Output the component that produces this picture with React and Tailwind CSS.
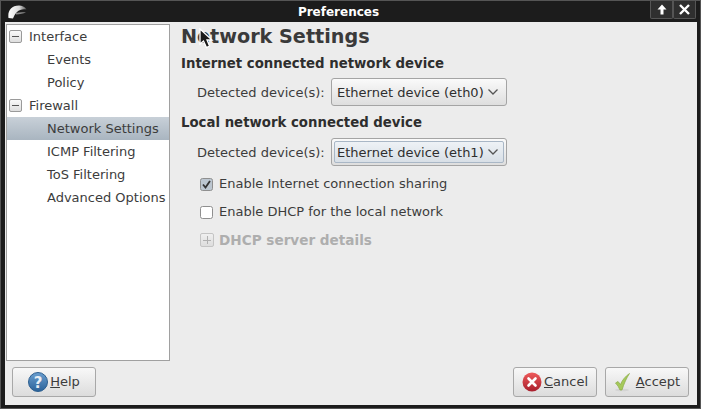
import React from "react";

const font = { fontFamily: '"DejaVu Sans", sans-serif' };

function Logo() {
  return (
    <svg width="20" height="14" viewBox="0 0 20 14" className="ml-[7px]">
      <defs>
        <linearGradient id="lg" x1="0" y1="0" x2="1" y2="0">
          <stop offset="0" stopColor="#ffffff" />
          <stop offset="0.6" stopColor="#d8d8d8" />
          <stop offset="1" stopColor="#555555" />
        </linearGradient>
      </defs>
      <path d="M0.5 13 C-0.5 6 3 0.5 11 0.5 C14 0.5 16.5 1.5 18.5 4.5 C15 3.8 11.5 4.5 9 7 C7 9 6 11 5 13.5 Z" fill="url(#lg)" />
      <path d="M8 8 C11 7 15 7 18 7.5 C15 8.7 12 9.2 8 9.6 Z" fill="#888" />
    </svg>
  );
}

function WmButton({ children, w }) {
  return (
    <div className={`h-[18px] ${w} flex items-center justify-center border border-t-0 border-[#555] rounded-b-[2px] bg-[#2f2f2f]`}>
      {children}
    </div>
  );
}

function Expander({ sign, disabled, size = 13 }) {
  const c = disabled ? "#b0b0b0" : "#555";
  const id = `ex${sign}${disabled ? 1 : 0}`;
  const mid = Math.floor(size / 2);
  return (
    <svg width={size} height={size} viewBox={`0 0 ${size} ${size}`} className="shrink-0">
      <defs>
        <linearGradient id={id} x1="0" y1="0" x2="0" y2="1">
          <stop offset="0" stopColor={disabled ? "#f0f0f0" : "#fbfbfb"} />
          <stop offset="1" stopColor={disabled ? "#dcdcdc" : "#dddddd"} />
        </linearGradient>
      </defs>
      <rect x="0.5" y="0.5" width={size - 1} height={size - 1} rx="1.5" fill={`url(#${id})`} stroke={disabled ? "#c4c4c4" : "#9a9a9a"} />
      <rect x="3" y={mid} width={size - 6} height="1" fill={c} />
      {sign === "plus" && <rect x={mid} y="3" width="1" height={size - 6} fill={c} />}
    </svg>
  );
}

function TreeRow({ label, parent, selected }) {
  return (
    <div
      className={`h-[23px] flex items-center whitespace-nowrap text-[#3c3c3c] ${parent ? "pl-[2px]" : "pl-[40px]"} ${
        selected ? "bg-gradient-to-b from-[#c8d0d8] to-[#a9b5c0]" : ""
      }`}
    >
      {parent && <Expander sign="minus" />}
      <span className={parent ? "ml-[7px]" : ""}>{label}</span>
    </div>
  );
}

function Combo({ text, focused }) {
  return (
    <div className="h-[28px] w-[176px] border border-[#a4a4a4] rounded-[3px] bg-gradient-to-b from-[#fafafa] to-[#dedede] flex p-[2px] shrink-0">
      <div className={`flex-1 flex items-center justify-between rounded-[2px] pl-[2px] pr-[3px] border ${focused ? "border-[#a9b7c6] bg-gradient-to-b from-[#eef2f6] to-[#d8dfe6]" : "border-transparent"}`}>
        <span className="text-[#2e2e2e] whitespace-nowrap pt-[1px]">{text}</span>
        <svg width="12" height="8" viewBox="0 0 12 8" className="mr-[1px]">
          <path d="M1.5 1.5 L6 6 L10.5 1.5" fill="none" stroke="#555" strokeWidth="1.3" />
        </svg>
      </div>
    </div>
  );
}

function DeviceRow({ text, focused }) {
  return (
    <div className="flex items-center h-[28px] pl-[16px] gap-[6px]">
      <span className="text-[#3c3c3c] whitespace-nowrap w-[128px] pt-[1px]">Detected device(s):</span>
      <Combo text={text} focused={focused} />
    </div>
  );
}

function Check({ checked, label }) {
  return (
    <div className="h-[28px] flex items-center pl-[19px] gap-[6px]">
      <svg width="13" height="13" viewBox="0 0 13 13" className="shrink-0">
        <rect x="0.5" y="0.5" width="12" height="12" rx="2" fill={checked ? "#bcc6d0" : "#ffffff"} stroke="#8f8f8f" />
        {checked && <path d="M3 6.5 L5.5 9.5 L10 3" fill="none" stroke="#333" strokeWidth="1.8" />}
      </svg>
      <span className="text-[#3c3c3c] whitespace-nowrap">{label}</span>
    </div>
  );
}

function HelpIcon() {
  return (
    <svg width="20" height="20" viewBox="0 0 20 20" className="shrink-0">
      <defs>
        <linearGradient id="hb" x1="0" y1="0" x2="0" y2="1">
          <stop offset="0" stopColor="#6b9fd0" />
          <stop offset="1" stopColor="#2a6299" />
        </linearGradient>
      </defs>
      <circle cx="10" cy="10" r="9.5" fill="url(#hb)" stroke="#2d5f90" />
      <text x="10" y="15.5" textAnchor="middle" fontSize="15" fontWeight="700" fill="#e8eef5" fontFamily="DejaVu Sans">?</text>
    </svg>
  );
}

function CancelIcon() {
  return (
    <svg width="20" height="20" viewBox="0 0 20 20" className="shrink-0">
      <defs>
        <linearGradient id="cb" x1="0" y1="0" x2="0" y2="1">
          <stop offset="0" stopColor="#ee5a5a" />
          <stop offset="1" stopColor="#a81f2d" />
        </linearGradient>
      </defs>
      <circle cx="10" cy="10" r="9.5" fill="url(#cb)" />
      <path d="M6.5 6.5 L13.5 13.5 M13.5 6.5 L6.5 13.5" stroke="#fff" strokeWidth="2.6" strokeLinecap="round" />
    </svg>
  );
}

function AcceptIcon() {
  return (
    <svg width="20" height="20" viewBox="0 0 20 20" className="shrink-0">
      <ellipse cx="8" cy="18" rx="7" ry="1.3" fill="#d4d4d4" />
      <path d="M1.5 11 L4 9.5 L6.5 12.5 C8 8.5 11 4.5 15.5 1.5 C12.5 6 10 11.5 8 18 L6 18 C5 15.5 3.5 13 1.5 11 Z" fill="#a5c95a" stroke="#8aab45" strokeWidth="0.7" />
    </svg>
  );
}

function Btn({ icon, mnemonic, rest, gap }) {
  return (
    <div className={`w-[84px] h-[30px] border border-[#a8a8a8] rounded-[3px] bg-gradient-to-b from-[#f8f8f8] to-[#dcdcdc] flex items-center justify-center ${gap}`}>
      {icon}
      <span className="text-[#3c3c3c]">
        <span className="underline">{mnemonic}</span>
        {rest}
      </span>
    </div>
  );
}

export default function App() {
  return (
    <div className="relative w-[701px] h-[409px] overflow-hidden bg-[#1c1c1c] text-[13px] border border-[#555]" style={font}>
      <div className="h-[21px] flex items-start justify-between">
        <div className="w-[76px] pt-[4px]"><Logo /></div>
        <div className="flex-1 text-center text-white font-bold text-[12px] leading-[23px] whitespace-nowrap">Preferences</div>
        <div className="flex w-[100px] justify-end pr-[4px]">
          <WmButton w="w-[23px]">
            <svg width="10" height="11" viewBox="0 0 10 11"><path d="M5 0.5 L9.5 5.5 H6.5 V10.5 H3.5 V5.5 H0.5 Z" fill="#fff" /></svg>
          </WmButton>
          <WmButton w="w-[23px]">
            <svg width="11" height="11" viewBox="0 0 11 11"><path d="M1 1 L10 10 M10 1 L1 10" stroke="#fff" strokeWidth="2.4" /></svg>
          </WmButton>
        </div>
      </div>

      <div className="ml-[4px] w-[692px] h-[383px] bg-[#ececec] flex flex-col">
        <div className="flex h-[339px] pt-[2px]">
          <div className="ml-[1px] w-[164px] h-[337px] border border-[#a0a0a0] bg-white shrink-0 overflow-hidden">
            <TreeRow label="Interface" parent />
            <TreeRow label="Events" />
            <TreeRow label="Policy" />
            <TreeRow label="Firewall" parent />
            <TreeRow label="Network Settings" selected />
            <TreeRow label="ICMP Filtering" />
            <TreeRow label="ToS Filtering" />
            <TreeRow label="Advanced Options" />
          </div>

          <div className="ml-[11px] flex-1 flex flex-col">
            <div className="h-[23px] pt-[2px] flex items-center text-[19.2px] font-bold text-[#3a3a3a] leading-none whitespace-nowrap">Network Settings</div>
            <div className="mt-[4px] h-[24px] pt-[1px] flex items-center font-bold text-[13.3px] text-[#2e2e2e]">Internet connected network device</div>
            <div className="mt-[3px]"><DeviceRow text="Ethernet device (eth0)" /></div>
            <div className="h-[32px] pt-[1px] flex items-center font-bold text-[13.3px] text-[#2e2e2e]">Local network connected device</div>
            <DeviceRow text="Ethernet device (eth1)" focused />
            <div className="mt-[4px]"><Check checked label="Enable Internet connection sharing" /></div>
            <Check label="Enable DHCP for the local network" />
            <div className="h-[28px] flex items-center pl-[19px] gap-[5px]">
              <Expander sign="plus" disabled size={14} />
              <span className="font-bold text-[13.6px] pt-[1px] text-[#aeaeae] whitespace-nowrap">DHCP server details</span>
            </div>
          </div>
        </div>

        <div className="flex-1 flex items-start justify-between pt-[6px] pl-[7px] pr-[8px]">
          <Btn icon={<HelpIcon />} mnemonic="H" rest="elp" gap="gap-[2px]" />
          <div className="flex gap-[8px]">
            <Btn icon={<CancelIcon />} mnemonic="C" rest="ancel" gap="gap-[2px]" />
            <Btn icon={<AcceptIcon />} mnemonic="A" rest="ccept" gap="gap-[2px]" />
          </div>
        </div>
      </div>

      <svg width="15" height="21" viewBox="0 0 15 21" className="absolute left-[198px] top-[27px]">
        <path d="M1 1 L1 16 L4.5 13 L7.5 19.5 L10.5 18 L8 12 L13 12 Z" fill="#1a1a1a" stroke="#ffffff" strokeWidth="1.3" />
      </svg>
    </div>
  );
}
